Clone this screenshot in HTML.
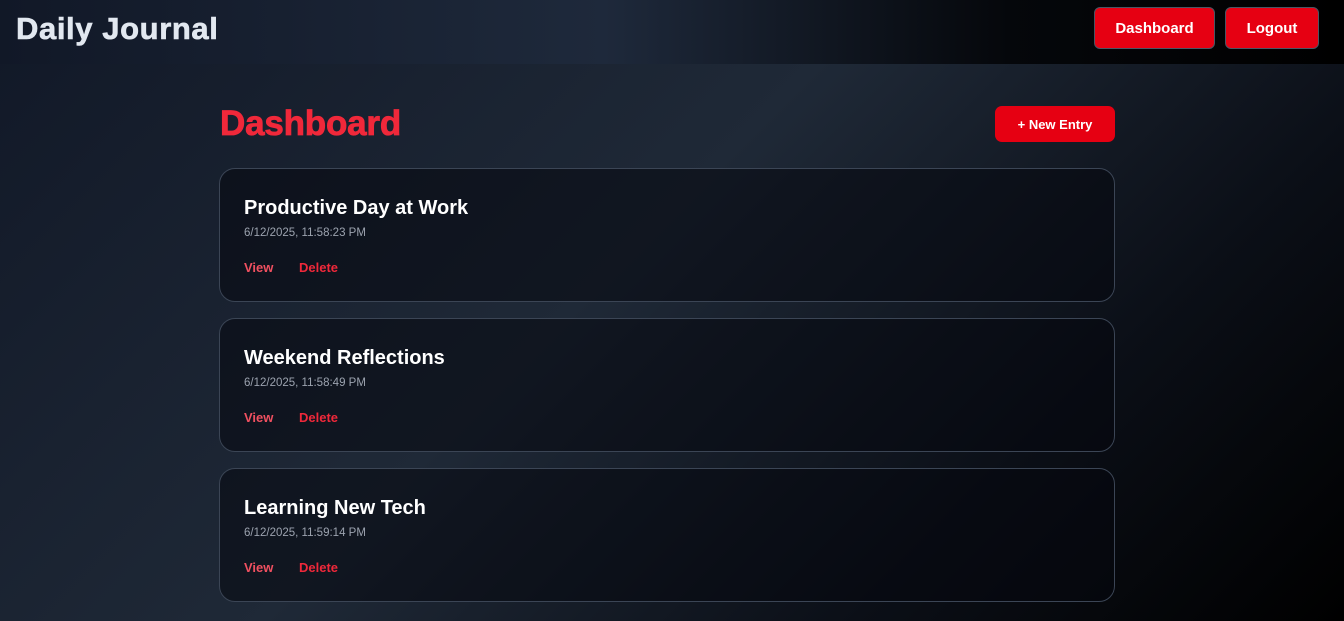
<!DOCTYPE html>
<html><head><style>
*{margin:0;padding:0;box-sizing:border-box}
html,body{width:1344px;height:621px;overflow:hidden}
body{font-family:"Liberation Sans",sans-serif;background:linear-gradient(135deg,#111827 0%,#1f2937 45%,#0b0f17 75%,#000 100%);position:relative}
.hdr{position:absolute;left:0;top:0;width:1344px;height:64px;background:linear-gradient(90deg,#111827 0%,#1e293b 45%,#05070b 75%,#000 100%)}
.logo{position:absolute;left:16px;top:11px;font-size:31px;font-weight:900;color:#e2e8f0;letter-spacing:0.6px;-webkit-text-stroke:0.6px #e2e8f0}
.btn{position:absolute;background:#e60012;color:#fff;font-weight:bold;font-size:15px;border:1px solid #4b5563;border-radius:6px;display:flex;align-items:center;justify-content:center}
h1{position:absolute;left:220px;top:104px;font-size:35px;font-weight:900;color:#f0283a;letter-spacing:-0.2px;-webkit-text-stroke:0.8px #f0283a}
.new{position:absolute;left:995px;top:106px;width:120px;height:36px;background:#e60012;border-radius:7px;color:#fff;font-weight:bold;font-size:13px;display:flex;align-items:center;justify-content:center}
.card{position:absolute;left:219px;width:896px;height:134px;border:1px solid #3b4555;border-radius:16px;background:rgba(5,8,14,0.55)}
.card h2{position:absolute;left:24px;top:28px;font-size:20px;font-weight:bold;color:#fff}
.card .d{position:absolute;left:24px;top:58px;font-size:11.5px;color:#9ca3af}
.card .l{position:absolute;top:91px;font-size:13px;font-weight:bold}
</style></head><body>
<div class="hdr">
<div class="logo">Daily Journal</div>
<div class="btn" style="left:1094px;top:7px;width:121px;height:42px">Dashboard</div>
<div class="btn" style="left:1225px;top:7px;width:94px;height:42px">Logout</div>
</div>
<h1>Dashboard</h1>
<div class="new">+ New Entry</div>
<div class="card" style="top:168px"><h2>Productive Day at Work</h2><div class="d">6/12/2025, 11:58:23 PM</div><span class="l" style="left:24px;color:#f05060">View</span><span class="l" style="left:79px;color:#f0283a">Delete</span></div>
<div class="card" style="top:318px"><h2>Weekend Reflections</h2><div class="d">6/12/2025, 11:58:49 PM</div><span class="l" style="left:24px;color:#f05060">View</span><span class="l" style="left:79px;color:#f0283a">Delete</span></div>
<div class="card" style="top:468px"><h2>Learning New Tech</h2><div class="d">6/12/2025, 11:59:14 PM</div><span class="l" style="left:24px;color:#f05060">View</span><span class="l" style="left:79px;color:#f0283a">Delete</span></div>
</body></html>
